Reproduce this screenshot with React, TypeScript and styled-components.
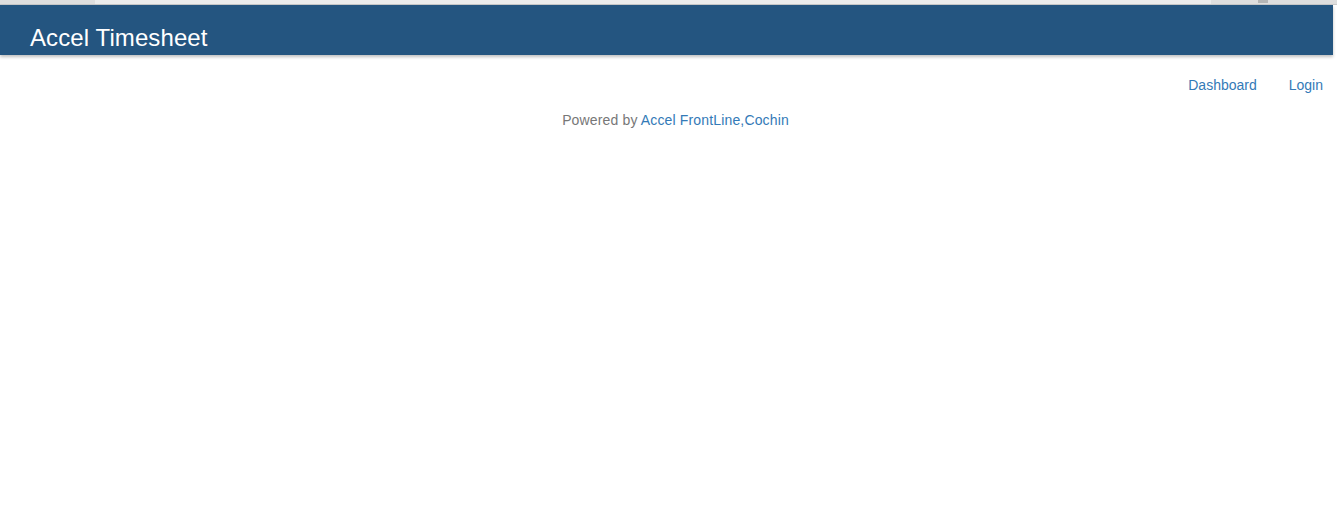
import React from "react";
import styled, { createGlobalStyle } from "styled-components";

const Global = createGlobalStyle`
  html, body { margin: 0; padding: 0; background: #fff; }
  body { font-family: "Liberation Sans", Arial, sans-serif; font-size: 14px; line-height: 1.42857; color: #333; }
  a { color: #337ab7; text-decoration: none; }
`;

const TopStrip = styled.div`
  display: flex;
  height: 4px;
  background: #dedede;
  border-bottom: 1px solid #c9c9c9;
`;

const StripSeg = styled.div<{ $w?: number; $light?: boolean }>`
  ${(p) => (p.$w ? `width: ${p.$w}px;` : "flex: 1;")}
  background: ${(p) => (p.$light ? "#ececec" : "#dedede")};
  position: relative;
`;

const StripMark = styled.div`
  position: absolute;
  left: 47px;
  top: 0;
  width: 10px;
  height: 3px;
  background: #b5b5b5;
`;

const Header = styled.header`
  display: flex;
  align-items: center;
  width: 1333px;
  height: 50px;
  background: #245580;
  box-shadow: 0 2px 3px rgba(0, 0, 0, 0.25);
  box-sizing: border-box;
  padding: 16px 0 0 30px;
`;

const Brand = styled.a`
  color: #fff;
  font-size: 24px;
  line-height: 1;
  letter-spacing: 0.1px;
`;

const Nav = styled.nav`
  display: flex;
  justify-content: flex-end;
  padding: 17px 0 0 0;
`;

const NavLink = styled.a`
  padding: 4px 14px 4px 18px;
  font-size: 14px;
`;

const Footer = styled.footer`
  text-align: center;
  color: #777;
  padding: 11px 0 0 14px;
  font-size: 14px;
  letter-spacing: 0.15px;
`;

export default function App() {
  return (
    <>
      <Global />
      <TopStrip>
        <StripSeg $w={95} />
        <StripSeg $light />
        <StripSeg $w={126}>
          <StripMark />
        </StripSeg>
      </TopStrip>
      <Header>
        <Brand href="#">Accel Timesheet</Brand>
      </Header>
      <Nav>
        <NavLink href="#">Dashboard</NavLink>
        <NavLink href="#">Login</NavLink>
      </Nav>
      <Footer>
        Powered by <a href="#">Accel FrontLine,Cochin</a>
      </Footer>
    </>
  );
}
